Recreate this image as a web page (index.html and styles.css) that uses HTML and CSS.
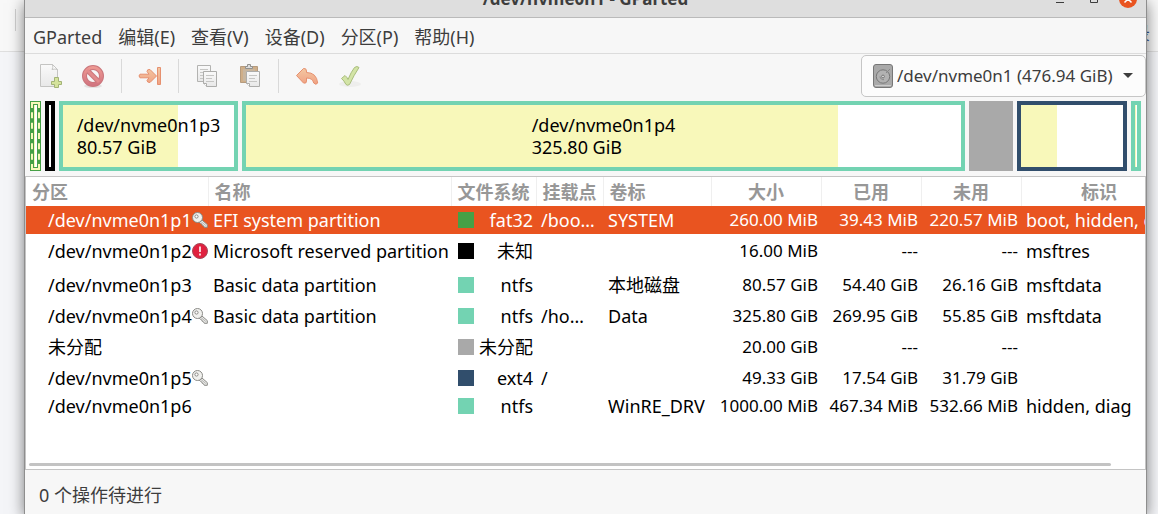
FILE: index.html
```html
<!DOCTYPE html>
<html lang="zh-CN">
<head>
<meta charset="utf-8">
<title>/dev/nvme0n1 - GParted</title>
<link rel="stylesheet" href="styles.css">
</head>
<body>
<div class="backdrop"><i class="backdrop-mark"></i><a class="backdrop-link" href="#">录</a></div>

<svg class="defs" aria-hidden="true">
  <defs>
    <symbol id="key" viewBox="0 0 16 16">
      <path d="M8.200 6.500 15.300 12.600V15.300H12.300L11.500 13.800 10.300 13.400 9.800 12 8.600 11.400 6 9z" fill="#e9e9e6" stroke="#8a8a86" stroke-linejoin="round"/>
      <circle cx="5.500" cy="5.500" r="5" fill="#f1f1ee" stroke="#8a8a86"/>
      <circle cx="4.500" cy="4.500" r="1.600" fill="#fff" stroke="#8a8a86"/>
      <path d="M9 9.500 13.800 13.500" stroke="#aaa" stroke-width=".8"/>
    </symbol>
    <linearGradient id="paper" x1="0" y1="0" x2="0" y2="1"><stop offset="0" stop-color="#fafafa"/><stop offset="1" stop-color="#e8e8e8"/></linearGradient>
    <linearGradient id="red" x1="0" y1="0" x2="0" y2="1"><stop offset="0" stop-color="#ed9892"/><stop offset="1" stop-color="#d37580"/></linearGradient>
    <linearGradient id="orange" x1="0" y1="0" x2="0" y2="1"><stop offset="0" stop-color="#f3c8a2"/><stop offset="1" stop-color="#f0a183"/></linearGradient>
  </defs>
</svg>

<main class="window">
  <header class="titlebar">
    <h1 class="title">/dev/nvme0n1 - GParted</h1>
    <div class="window-buttons">
      <button class="window-button" aria-label="最小化"><svg width="10" height="10" viewBox="0 0 10 10"><path d="M1 8.500h8" stroke="#3d3d3d" stroke-width="1"/></svg></button>
      <button class="window-button" aria-label="最大化"><svg width="10" height="10" viewBox="0 0 10 10"><path d="M1.500 1.500h7v7h-7z" fill="none" stroke="#3d3d3d"/></svg></button>
      <button class="window-button close" aria-label="关闭"><svg width="10" height="10" viewBox="0 0 10 10"><path d="m1.500 1.500 7 7m0-7-7 7" stroke="#fff" stroke-width="1.500"/></svg></button>
    </div>
  </header>

  <nav class="menubar">
    <button class="menu">GParted</button>
    <button class="menu">编辑(E)</button>
    <button class="menu">查看(V)</button>
    <button class="menu">设备(D)</button>
    <button class="menu">分区(P)</button>
    <button class="menu">帮助(H)</button>
  </nav>

  <div class="toolbar">
    <button class="tool" aria-label="新建"><svg width="24" height="24" viewBox="0 0 24 24"><path d="M2.500.500h12l5 5v17h-17z" fill="url(#paper)" stroke="#c4c4c2"/><path d="M14.500.500q1 3-.500 5 3-1 5.500 0z" fill="#fff" stroke="#c4c4c2"/><path d="M16.500 13.500h4v4h3v3h-3v3h-4v-3h-3v-3h3z" fill="#d5e39c" stroke="#a3b377"/></svg></button>
    <button class="tool" aria-label="删除"><svg width="24" height="24" viewBox="0 0 24 24"><ellipse cx="12" cy="22" rx="9" ry="2" fill="#e4e2e2"/><circle cx="12" cy="12" r="8.500" fill="none" stroke="#ca767c" stroke-width="5"/><path d="m6 6 12 12" stroke="#ca767c" stroke-width="5"/><circle cx="12" cy="12" r="8.500" fill="none" stroke="url(#red)" stroke-width="3"/><path d="m6 6 12 12" stroke="#e28b8c" stroke-width="3"/></svg></button>
    <i class="separator"></i>
    <button class="tool" aria-label="调整大小/移动"><svg width="24" height="24" viewBox="0 0 24 24"><path d="M19.500 3.500h3v17h-3zM2 10.200h9L9 7.500q0-2.500 3-2l6.500 6.500-6.500 6.500q-3 0-3-2l2-2.700H2q-2-1.900 0-3.600z" fill="url(#orange)" stroke="#e6906f" stroke-linejoin="round"/></svg></button>
    <i class="separator"></i>
    <button class="tool" aria-label="复制"><svg width="24" height="24" viewBox="0 0 24 24"><path d="M2.500 1.500h13v16h-13z" fill="url(#paper)" stroke="#b3b3b1"/><path d="M5 5.500h8M5 8.500h6M5 11.500h3M5 14.500h3" stroke="#c6c6c4"/><path d="M8.500 7.500h13v15h-10l-3-3z" fill="url(#paper)" stroke="#adadab"/><path d="M11 11.500h8M11 14.500h6M11 17.500h8" stroke="#c6c6c4"/><path d="M8.500 19.500h3v3" fill="#fff" stroke="#adadab"/></svg></button>
    <button class="tool" aria-label="粘贴"><svg width="24" height="24" viewBox="0 0 24 24"><path d="M2.500 2.500h17v16h-17z" fill="#cfae88" stroke="#b59b7e"/><path d="M5 5h12v12H5z" fill="#c8b69f"/><path d="M7.500 4.500v-2h2v-2h3v2h2v2z" fill="#ddd" stroke="#90908e"/><path d="M8.500 7.500h13v15h-10l-3-3z" fill="url(#paper)" stroke="#adadab"/><path d="M11 11.500h8M11 14.500h6M11 17.500h8" stroke="#c6c6c4"/><path d="M8.500 19.500h3v3" fill="#fff" stroke="#adadab"/></svg></button>
    <i class="separator"></i>
    <button class="tool" aria-label="撤消"><svg width="24" height="24" viewBox="0 0 24 24"><path d="M1.500 11.500 8.500 4.500q3-.5 3 2.500v1.500q10 0 11.200 10.500-1.700 2.500-4 0-1-5-7.200-5v3q0 3-3 2z" fill="url(#orange)" stroke="#e6906f" stroke-linejoin="round"/></svg></button>
    <button class="tool" aria-label="应用"><svg width="24" height="24" viewBox="0 0 24 24"><ellipse cx="12" cy="20" rx="11" ry="3" fill="#eeeeed"/><path d="m3.500 14.500 3.500-3q2 1.500 3 4Q13 8 16.500 3.500q2.500-2 4.500 0-5 7.500-9.500 17-2 1.500-3.500 0-2-4-4.500-6z" fill="#d3e4a6" stroke="#a9bd7d" stroke-linejoin="round"/></svg></button>
    <label class="device">
      <svg width="20" height="24" viewBox="0 0 20 24"><rect x=".5" y=".5" width="19" height="23" rx="2.500" fill="#a9a9a9" stroke="#777"/><path d="M2 21.500h16" stroke="#ccc"/><circle cx="10" cy="12.500" r="6.700" fill="#b2b2b2" stroke="#777"/><circle cx="10" cy="12.500" r="1.400" fill="#ddd" stroke="#777"/><path d="M7 12.500a3.500 3.500 0 0 0 4 3.200M13 9l4-4" fill="none" stroke="#888"/></svg>
      <select class="device-select" aria-label="设备"><option>/dev/nvme0n1 (476.94 GiB)</option></select>
      <svg class="caret" width="10" height="5" viewBox="0 0 10 5"><path d="M0 0h10L5 5z" fill="#3d3d3d"/></svg>
    </label>
  </div>

  <section class="disk">
    <div class="part selected"><i class="used" style="width:15%"></i></div>
    <div class="part unknown"></div>
    <div class="part ntfs"><i class="used" style="width:67.300%"></i><p class="part-label">/dev/nvme0n1p3<br>80.57 GiB</p></div>
    <div class="part ntfs"><i class="used" style="width:82.800%"></i><p class="part-label">/dev/nvme0n1p4<br>325.80 GiB</p></div>
    <div class="part unallocated"></div>
    <div class="part ext4"><i class="used" style="width:35.300%"></i></div>
    <div class="part ntfs"><i class="used" style="width:50%"></i></div>
  </section>

  <section class="list">
    <table class="partitions">
      <colgroup><col class="c-part"><col class="c-name"><col class="c-fs"><col class="c-mount"><col class="c-label"><col class="c-size"><col class="c-used"><col class="c-used"><col class="c-flags"></colgroup>
      <thead>
        <tr><th>分区</th><th>名称</th><th>文件系统</th><th>挂载点</th><th>卷标</th><th class="mid">大小</th><th class="mid">已用</th><th class="mid">未用</th><th class="mid">标识</th></tr>
      </thead>
      <tbody>
        <tr class="active"><td><div class="dev">/dev/nvme0n1p1<svg class="mark"><use href="#key"/></svg></div></td><td>EFI system partition</td><td><div class="fs fat32">fat32</div></td><td>/boo…</td><td>SYSTEM</td><td class="num">260.00 MiB</td><td class="num">39.43 MiB</td><td class="num">220.57 MiB</td><td>boot, hidden, esp</td></tr>
        <tr class="tall"><td><div class="dev">/dev/nvme0n1p2<svg class="mark" viewBox="0 0 16 16"><circle cx="8" cy="8" r="7.500" fill="#e0213f" stroke="#a34a58"/><path d="M8 3.500v5.500M8 10.500v2" stroke="#fff" stroke-width="1.600"/></svg></div></td><td>Microsoft reserved partition</td><td><div class="fs none">未知</div></td><td></td><td></td><td class="num">16.00 MiB</td><td class="num">---</td><td class="num">---</td><td>msftres</td></tr>
        <tr class="tall"><td><div class="dev">/dev/nvme0n1p3</div></td><td>Basic data partition</td><td><div class="fs">ntfs</div></td><td></td><td>本地磁盘</td><td class="num">80.57 GiB</td><td class="num">54.40 GiB</td><td class="num">26.16 GiB</td><td>msftdata</td></tr>
        <tr><td><div class="dev">/dev/nvme0n1p4<svg class="mark"><use href="#key"/></svg></div></td><td>Basic data partition</td><td><div class="fs">ntfs</div></td><td>/ho…</td><td>Data</td><td class="num">325.80 GiB</td><td class="num">269.95 GiB</td><td class="num">55.85 GiB</td><td>msftdata</td></tr>
        <tr class="tall"><td><div class="dev">未分配</div></td><td></td><td><div class="fs free">未分配</div></td><td></td><td></td><td class="num">20.00 GiB</td><td class="num">---</td><td class="num">---</td><td></td></tr>
        <tr><td><div class="dev">/dev/nvme0n1p5<svg class="mark"><use href="#key"/></svg></div></td><td></td><td><div class="fs linux">ext4</div></td><td>/</td><td></td><td class="num">49.33 GiB</td><td class="num">17.54 GiB</td><td class="num">31.79 GiB</td><td></td></tr>
        <tr><td><div class="dev">/dev/nvme0n1p6</div></td><td></td><td><div class="fs">ntfs</div></td><td></td><td>WinRE_DRV</td><td class="num">1000.00 MiB</td><td class="num">467.34 MiB</td><td class="num">532.66 MiB</td><td>hidden, diag</td></tr>
      </tbody>
    </table>
    <div class="scrollbar"></div>
  </section>

  <footer class="status">0 个操作待进行</footer>
</main>
</body>
</html>
```

FILE: styles.css
```css
* { box-sizing: border-box; }

body {
  margin: 0;
  height: 100vh;
  overflow: hidden;
  display: flex;
  background: linear-gradient(#f8f8f8 51px, #dfdfdf 51px, #dfdfdf 52px, #f4f5f8 52px);
  color: #3d3d3d;
  font: 18px/22px "Noto Sans", "Noto Sans CJK SC", sans-serif;
}

button, select { font: inherit; color: inherit; border: 0; background: none; padding: 0; margin: 0; }
svg { flex: none; }
.defs { position: absolute; width: 0; height: 0; }

.backdrop { position: absolute; inset: 0; z-index: -1; overflow: hidden; }
.backdrop-mark { position: absolute; left: 15px; top: 9px; width: 1px; height: 22px; background: #d0d0d0; }
.backdrop-link { position: absolute; right: 8px; top: 22px; color: #35568f; text-decoration: none; }

.window {
  flex: 1;
  min-width: 0;
  margin: 0 11px 0 24px;
  display: flex;
  flex-direction: column;
  background: #f7f7f7;
  border: solid #8e8e8e;
  border-width: 0 1px;
  box-shadow: 0 3px 14px rgba(0, 0, 0, .5);
}

.titlebar {
  height: 38px;
  margin-top: -20px;
  flex: none;
  display: grid;
  grid-template-columns: 1fr auto 1fr;
  align-items: center;
  background: #dedede;
  border-bottom: 1px solid #bababa;
}
.title { grid-column: 2; margin: 0; font-size: 17px; font-weight: 700; }
.window-buttons { padding-right: 9px; display: flex; justify-content: flex-end; align-items: center; gap: 16px; }
.window-button { width: 18px; height: 18px; display: grid; place-items: center; border-radius: 50%; }
.close { background: #e95420; }

.menubar { flex: none; height: 36px; padding-top: 2px; display: flex; border-bottom: 1px solid #dcdcdc; }
.menu { padding: 0 8px; }

.toolbar { flex: none; height: 43px; padding-left: 4px; display: flex; align-items: center; gap: 1px; }
.tool { width: 42px; height: 34px; display: grid; place-items: center; }
.separator { width: 1px; height: 34px; margin: 0 6px; background: #d9d9d9; }
.device {
  height: 42px;
  margin-left: auto;
  padding: 0 12px 0 11px;
  display: flex;
  align-items: center;
  gap: 4px;
  background: #fcfcfc;
  border: 1px solid #c6c6c6;
  border-radius: 5px;
  font-size: 17px;
}
.device-select { appearance: none; padding-right: 4px; }
.caret { margin-left: 2px; }

.disk {
  flex: none;
  height: 70px;
  margin: 4px 5px 5px;
  display: grid;
  grid-template-columns: 11fr 10fr 179fr 723fr 44fr 110fr 10fr;
  gap: 4px;
  color: #000;
}
.part { min-width: 0; display: grid; background: #fff; border: 4px solid #73d3b2; }
.part > * { grid-area: 1 / 1; }
.used { background: #f8f8ba; }
.part-label { margin: 0; place-self: center; }
.unknown { border-color: #000; }
.unallocated { background: #a9a9a9; border-color: #a9a9a9; }
.ext4 { border-color: #314e6c; }
.selected { border-color: #46a046; outline: 2px dashed #f8f8ba; outline-offset: -3px; }

.list { flex: none; height: 294px; display: flex; flex-direction: column; overflow: hidden; background: #fff; border: 1px solid #c4c4c4; }
.partitions { width: 1151px; table-layout: fixed; border-collapse: collapse; color: #000; }
.c-part { width: 182px; }
.c-name { width: 243px; }
.c-fs { width: 85px; }
.c-mount { width: 67px; }
.c-label { width: 108px; }
.c-size { width: 110px; }
.c-used { width: 100px; }
.c-flags { width: 156px; }
.partitions th { height: 29px; padding: 0 0 0 6px; text-align: left; color: #979797; border-right: 1px solid #efefef; }
.partitions .mid { text-align: center; padding: 0; }
.partitions td { height: 28px; padding: 0 3px 0 5px; white-space: nowrap; }
.partitions .tall td { height: 34px; }
.partitions .num { padding-left: 0; text-align: right; font-size: 17px; }
.active { background: #e95420; color: #fff; }
.dev { display: flex; align-items: center; justify-content: space-between; margin: 0 -3px 0 17px; }
.mark { width: 16px; height: 16px; }
.fs { display: flex; align-items: center; justify-content: space-between; margin-left: 2px; }
.fs::before { content: ""; width: 16px; height: 16px; background: #73d3b2; }
.fat32::before { background: #46a046; }
.none::before { background: #000; }
.free::before { background: #a9a9a9; }
.linux::before { background: #314e6c; }
.scrollbar { flex: none; height: 3px; margin: auto 34px 3px 3px; border-radius: 2px; background: #c3c3c3; }

.status { padding: 14px; }
```
